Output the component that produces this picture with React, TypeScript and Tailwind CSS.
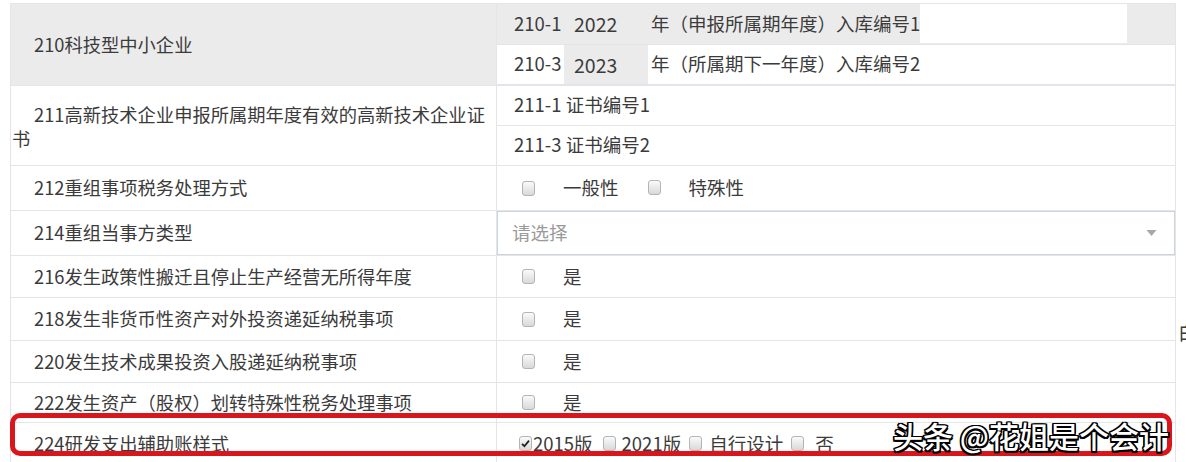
import React from "react";

const font = { fontFamily: '"Noto Sans CJK SC", "Noto Sans", sans-serif' };

function Box({ checked = false }: { checked?: boolean }) {
  return (
    <span className="inline-flex h-[15px] w-[13px] shrink-0 items-center justify-center rounded-[3px] border border-[#b4b4b4] bg-gradient-to-b from-[#fafafa] to-[#d9d9d9]">
      {checked && (
        <svg viewBox="0 0 12 12" className="h-[11px] w-[11px]">
          <path d="M2.2 6.4 L4.8 9 L9.8 2.8" fill="none" stroke="#222" strokeWidth="2" />
        </svg>
      )}
    </span>
  );
}

function Row({
  h,
  label,
  children,
  gray = false,
}: {
  h: string;
  label: React.ReactNode;
  children: React.ReactNode;
  gray?: boolean;
}) {
  return (
    <div className={`flex border-b border-[#e2e6ea] ${h}`}>
      <div
        className={`flex w-[486px] shrink-0 items-center border-r border-[#e2e6ea] pl-[23px] text-[18.3px] text-[#3b3b3b] ${
          gray ? "bg-[#ebebeb]" : ""
        }`}
      >
        {label}
      </div>
      <div className="flex flex-1 flex-col">{children}</div>
    </div>
  );
}

function YesRow({ h, label }: { h: string; label: string }) {
  return (
    <Row h={h} label={label}>
      <div className="flex h-full items-center pl-[25px] text-[18.5px] text-[#3b3b3b]">
        <Box />
        <span className="ml-[28px]">是</span>
      </div>
    </Row>
  );
}

export default function App() {
  return (
    <div className="relative h-[462px] w-[1186px] overflow-hidden bg-white" style={font}>
      <div className="ml-[10px] mt-[3px] w-[1166px] border-l border-r border-t border-[#e2e6ea]">
        {/* 210 */}
        <Row h="h-[82px]" label="210科技型中小企业" gray>
          <div className="flex h-[41px] items-center border-b border-[#e2e6ea] bg-[#ebebeb] text-[18.5px] text-[#3b3b3b]">
            <span className="w-[67px] pl-[17px]">210-1</span>
            <span className="w-[87px] pl-[10px] text-[19.5px]">2022</span>
            <span className="w-[269px] whitespace-nowrap">年（申报所属期年度）入库编号1</span>
            <div className="h-[39px] w-[207px] self-start bg-white" />
          </div>
          <div className="flex h-[41px] items-center border-b border-[#e2e6ea] text-[18.5px] text-[#3b3b3b]">
            <span className="w-[67px] pl-[17px]">210-3</span>
            <span className="flex h-full w-[84px] items-center bg-[#ebebeb] pl-[10px] text-[19.5px]">2023</span>
            <span className="whitespace-nowrap pl-[3px]">年（所属期下一年度）入库编号2</span>
          </div>
        </Row>

        {/* 211 */}
        <div className="flex h-[80px] border-b border-[#e2e6ea]">
          <div className="flex w-[486px] shrink-0 flex-col justify-center border-r border-[#e2e6ea] text-[18.3px] leading-[24px] text-[#3b3b3b]">
            <span className="whitespace-nowrap pl-[23px]">211高新技术企业申报所属期年度有效的高新技术企业证</span>
            <span className="pl-[1px]">书</span>
          </div>
          <div className="flex flex-1 flex-col text-[18.5px] text-[#3b3b3b]">
            <div className="flex h-[40px] items-center border-b border-[#e2e6ea] pl-[17px]">211-1 证书编号1</div>
            <div className="flex h-[40px] items-center pl-[17px]">211-3 证书编号2</div>
          </div>
        </div>

        {/* 212 */}
        <Row h="h-[45px]" label="212重组事项税务处理方式">
          <div className="flex h-full items-center pl-[25px] text-[18.5px] text-[#3b3b3b]">
            <Box />
            <span className="ml-[28px]">一般性</span>
            <span className="ml-[29px]">
              <Box />
            </span>
            <span className="ml-[28px]">特殊性</span>
          </div>
        </Row>

        {/* 214 */}
        <Row h="h-[45px]" label="214重组当事方类型">
          <div className="flex h-full items-center justify-between border border-[#cfd4d9] pl-[14px] pr-[17px] text-[18.5px] text-[#9a9a9a]">
            <span>请选择</span>
            <svg viewBox="0 0 10 6" className="h-[6px] w-[11px]">
              <path d="M0 0 H10 L5 6 Z" fill="#a8a8a8" />
            </svg>
          </div>
        </Row>

        <YesRow h="h-[42px]" label="216发生政策性搬迁且停止生产经营无所得年度" />
        <YesRow h="h-[43px]" label="218发生非货币性资产对外投资递延纳税事项" />
        <YesRow h="h-[42px]" label="220发生技术成果投资入股递延纳税事项" />
        <YesRow h="h-[40px]" label="222发生资产（股权）划转特殊性税务处理事项" />

        {/* 224 */}
        <Row h="h-[42px]" label="224研发支出辅助账样式">
          <div className="flex h-full items-center pl-[22px] text-[18.5px] text-[#3b3b3b]">
            <Box checked />
            <span className="ml-[1px]">2015版</span>
            <span className="ml-[10px]">
              <Box />
            </span>
            <span className="ml-[6px]">2021版</span>
            <span className="ml-[8px]">
              <Box />
            </span>
            <span className="ml-[7px]">自行设计</span>
            <span className="ml-[8px]">
              <Box />
            </span>
            <span className="ml-[11px]">否</span>
          </div>
        </Row>
      </div>

      {/* partial glyph at the right edge */}
      <span className="absolute left-[1178px] top-[318px] text-[19px] text-[#3b3b3b]">白</span>

      {/* red highlight */}
      <div className="pointer-events-none absolute left-[10px] top-[413px] h-[43px] w-[1162px] rounded-[10px] border-[5px] border-[#d9161c]" />

      {/* watermark */}
      <span className="absolute left-[893px] top-[413px] whitespace-nowrap text-[30px] font-medium text-white [text-shadow:1.5px_1.5px_0_#000,-1.5px_-1.5px_0_#000,1.5px_-1.5px_0_#000,-1.5px_1.5px_0_#000,0_1.5px_0_#000,0_-1.5px_0_#000,1.5px_0_0_#000,-1.5px_0_0_#000]">
        头条 @花姐是个会计
      </span>
    </div>
  );
}
